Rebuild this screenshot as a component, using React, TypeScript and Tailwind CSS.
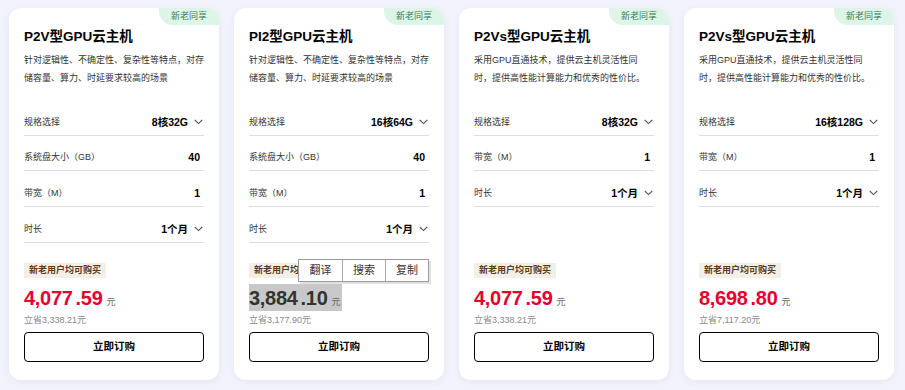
import React from "react";

type Row = { label: string; value: string; select?: boolean };
type Card = {
  title: string;
  desc: string;
  rows: Row[];
  int: string;
  dec: string;
  save: string;
  selected?: boolean;
};

const cards: Card[] = [
  {
    title: "P2V型GPU云主机",
    desc: "针对逻辑性、不确定性、复杂性等特点，对存储容量、算力、时延要求较高的场景",
    rows: [
      { label: "规格选择", value: "8核32G", select: true },
      { label: "系统盘大小（GB）", value: "40" },
      { label: "带宽（M）", value: "1" },
      { label: "时长", value: "1个月", select: true },
    ],
    int: "4,077",
    dec: ".59",
    save: "立省3,338.21元",
  },
  {
    title: "PI2型GPU云主机",
    desc: "针对逻辑性、不确定性、复杂性等特点，对存储容量、算力、时延要求较高的场景",
    rows: [
      { label: "规格选择", value: "16核64G", select: true },
      { label: "系统盘大小（GB）", value: "40" },
      { label: "带宽（M）", value: "1" },
      { label: "时长", value: "1个月", select: true },
    ],
    int: "3,884",
    dec: ".10",
    save: "立省3,177.90元",
    selected: true,
  },
  {
    title: "P2Vs型GPU云主机",
    desc: "采用GPU直通技术，提供云主机灵活性同时，提供高性能计算能力和优秀的性价比。",
    rows: [
      { label: "规格选择", value: "8核32G", select: true },
      { label: "带宽（M）", value: "1" },
      { label: "时长", value: "1个月", select: true },
    ],
    int: "4,077",
    dec: ".59",
    save: "立省3,338.21元",
  },
  {
    title: "P2Vs型GPU云主机",
    desc: "采用GPU直通技术，提供云主机灵活性同时，提供高性能计算能力和优秀的性价比。",
    rows: [
      { label: "规格选择", value: "16核128G", select: true },
      { label: "带宽（M）", value: "1" },
      { label: "时长", value: "1个月", select: true },
    ],
    int: "8,698",
    dec: ".80",
    save: "立省7,117.20元",
  },
];

function Chevron() {
  return (
    <svg width="9" height="6" viewBox="0 0 9 6" className="ml-[6px] mr-[1px]">
      <path d="M0.8 1 L4.5 4.6 L8.2 1" fill="none" stroke="#555" strokeWidth="1.1" />
    </svg>
  );
}

function ProductCard({ c }: { c: Card }) {
  return (
    <div className="relative flex h-[372px] w-[210px] flex-col rounded-[12px] bg-white px-[15px] pb-[18px] pt-[19px] shadow-[0_2px_8px_rgba(60,60,120,0.07)]">
      <div className="absolute right-0 top-0 flex h-[17px] w-[60px] items-center justify-center rounded-bl-[14px] rounded-tr-[12px] bg-[#dcf5e6] text-[9px] leading-none text-[#3f7d62]">
        新老同享
      </div>
      <div className="text-[13.5px] font-bold leading-[20px] text-black">{c.title}</div>
      <div className="mt-[4px] text-[9px] leading-[18px] text-[#333]">{c.desc}</div>
      <div className="mt-[14px] flex flex-col">
        {c.rows.map((r, i) => (
          <div
            key={i}
            className={
              "flex items-center justify-between border-b border-[#dedede] pb-[5px] leading-[16px] " +
              (i < 2 ? "pt-[13px]" : "pt-[14px]")
            }
          >
            <span className="text-[9px] text-[#333]">{r.label}</span>
            <span className="flex items-center">
              <span className={"text-[10.5px] font-semibold text-black " + (r.select ? "" : "pr-[4px]")}>
                {r.value}
              </span>
              {r.select ? <Chevron /> : null}
            </span>
          </div>
        ))}
      </div>
      <div className="mt-auto flex flex-col items-start">
        <div className="flex h-[15px] items-center bg-[#f3eee6] px-[5px] text-[9px] font-semibold leading-none text-[#5a3a1c]">
          新老用户均可购买
        </div>
        <div
          className={
            "mt-[6px] flex h-[27px] items-baseline pr-[2px] " + (c.selected ? "bg-[#c8c8c8]" : "")
          }
        >
          <span
            className={
              "pt-[2px] text-[20px] font-bold leading-[25px] tracking-[-0.3px] " +
              (c.selected ? "text-[#333]" : "text-[#e5002d]")
            }
          >
            {c.int}
          </span>
          <span
            className={
              "ml-[3px] text-[20px] font-bold leading-[25px] tracking-[-0.3px] " +
              (c.selected ? "text-[#333]" : "text-[#e5002d]")
            }
          >
            {c.dec}
          </span>
          <span className="ml-[4px] text-[9px] text-[#666]">元</span>
        </div>
        <div className="mt-[1px] text-[9px] leading-[16px] text-[#888]">{c.save}</div>
        <button className="mt-[4px] flex h-[30px] w-full items-center justify-center rounded-[4px] border border-black bg-white text-[10.5px] font-bold text-black">
          立即订购
        </button>
      </div>
      {c.selected ? (
        <div className="absolute left-[64px] top-[251px] flex h-[23px] border border-[#9a9a9a] bg-white shadow-[2px_2px_0_rgba(0,0,0,0.12)]">
          {["翻译", "搜索", "复制"].map((t, i) => (
            <div
              key={t}
              className={
                "flex w-[43px] items-center justify-center text-[11px] text-[#333] " +
                (i > 0 ? "border-l border-[#aaa]" : "")
              }
            >
              {t}
            </div>
          ))}
        </div>
      ) : null}
    </div>
  );
}

export default function App() {
  return (
    <div className="h-[390px] w-[905px] bg-[#f3f3fc] font-['Liberation_Sans','Noto_Sans_CJK_SC',sans-serif]">
      <div className="flex gap-[15px] pl-[9px] pt-[8px]">
        {cards.map((c, i) => (
          <ProductCard key={i} c={c} />
        ))}
      </div>
    </div>
  );
}
